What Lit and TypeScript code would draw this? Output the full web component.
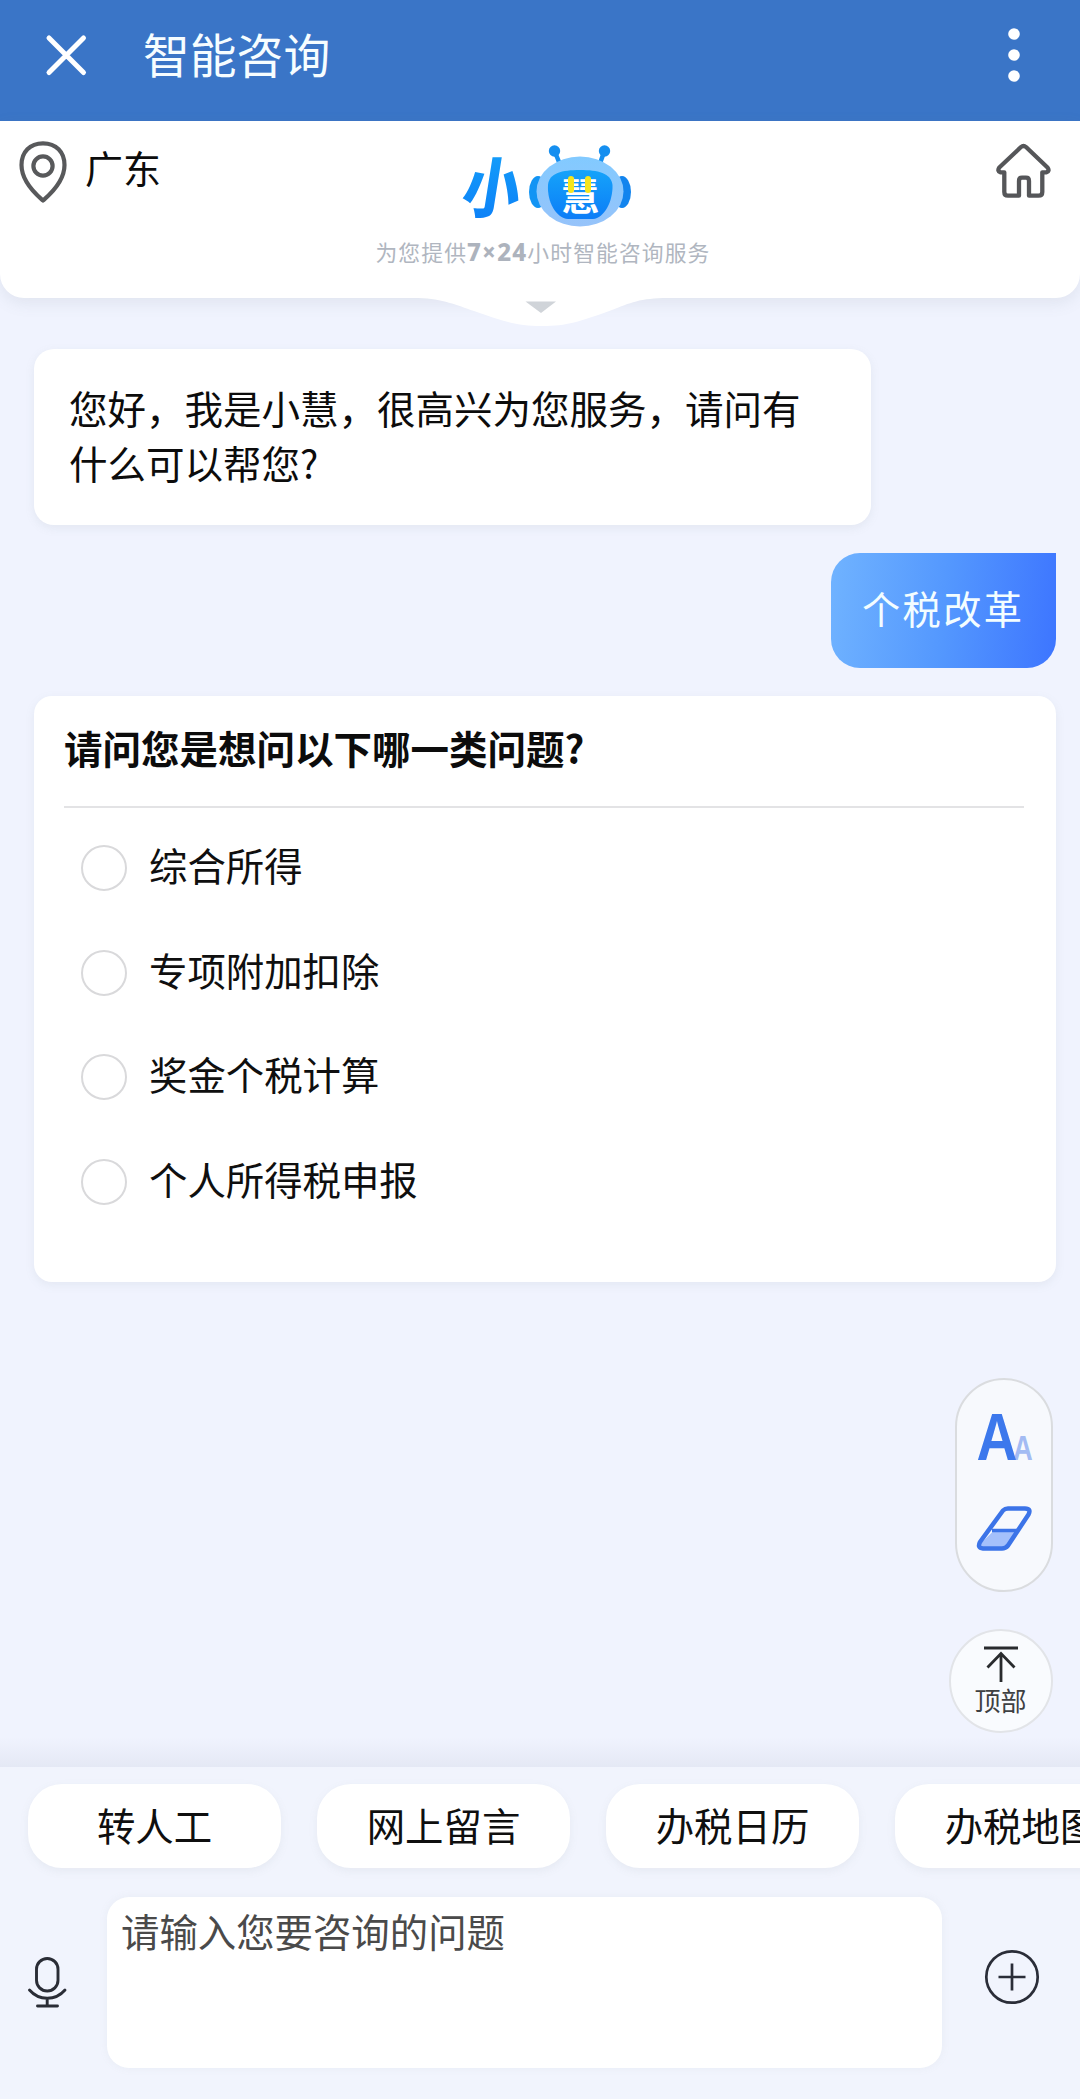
import { LitElement, html, css } from "lit";
import { customElement, property, state } from "lit/decorators.js";

@customElement("app-bar")
class AppBar extends LitElement {
  static styles = css`
    :host { display: flex; align-items: center; height: 121px; background: #3a75c7; color: #f6fdff; box-sizing: border-box; padding: 0 60px 12px 44px; }
    .close, .more { display: block; flex: none; }
    .title { flex: 1; margin: -4px 0 0 55px; font-size: 46.8px; line-height: 70px; font-weight: 400; }
  `;
  render() {
    return html`
      <svg class="close" width="44" height="44" viewBox="0 0 44 44" fill="none" stroke="#fff" stroke-width="5" stroke-linecap="round"><path d="M5 5L39.500 39.500M39.500 5L5 39.500" /></svg>
      <h1 class="title">智能咨询</h1>
      <svg class="more" width="12" height="56" viewBox="0 0 12 56" fill="#fff"><circle cx="6" cy="7" r="5.800" /><circle cx="6" cy="28" r="5.800" /><circle cx="6" cy="49" r="5.800" /></svg>
    `;
  }
}

@customElement("brand-header")
class BrandHeader extends LitElement {
  static styles = css`
    :host { display: block; position: relative; z-index: 1; height: 177px; }
    .panel { display: flex; justify-content: space-between; height: 177px; box-sizing: border-box; background: #fff; border-radius: 0 0 24px 24px; box-shadow: 0 5px 16px rgba(105, 120, 130, 0.12); padding: 0 26px 0 17px; }
    .place { display: flex; align-items: flex-start; width: 235px; padding-top: 18px; box-sizing: border-box; }
    .city { font-size: 38px; line-height: 56px; margin-left: 16px; color: #0c0c0c; }
    .brand { display: flex; flex-direction: column; align-items: center; padding-top: 20px; }
    .logo { display: block; margin-left: 5px; }
    .slogan { display: flex; align-items: center; font-size: 21.800px; letter-spacing: 1.100px; line-height: 30px; color: #b0b6c0; margin-top: 4px; white-space: nowrap; }
    .hours { font-family: "Noto Sans", sans-serif; font-size: 24px; font-weight: 800; letter-spacing: 1.200px; color: #adb3bd; }
    .side { display: flex; justify-content: flex-end; width: 220px; padding-top: 21px; box-sizing: border-box; }
    .bump { position: absolute; left: 418px; top: 170px; }
  `;
  render() {
    return html`
      <div class="panel">
        <div class="place">
          <svg width="52" height="66" viewBox="0 0 52 66" fill="none" stroke="#58595b" stroke-width="4.200" stroke-linejoin="round"><path d="M26 61.500C21 57 4.500 44 4.500 26C4.500 13 13 4.300 26 4.300S47.500 13 47.500 26C47.500 44 31 57 26 61.500Z" /><circle cx="26" cy="27" r="9.600" /></svg>
          <span class="city">广东</span>
        </div>
        <div class="brand">
          <svg class="logo" width="180" height="92" viewBox="0 0 180 92">
            <defs>
              <linearGradient id="ink" x1="0" y1="0" x2="0" y2="1"><stop offset="0" stop-color="#15a3fa" /><stop offset="1" stop-color="#0c7df7" /></linearGradient>
              <linearGradient id="shell" x1="0" y1="0" x2="0" y2="1"><stop offset="0" stop-color="#82caff" /><stop offset="1" stop-color="#96c3fa" /></linearGradient>
            </defs>
            <text x="0" y="0" transform="translate(4.500 71) skewX(-9) scale(.9 1.020)" font-family="Noto Sans CJK SC, sans-serif" font-weight="900" font-size="64" fill="url(#ink)">小</text>
            <ellipse cx="83" cy="51" rx="9" ry="16" fill="#1294f4" />
            <ellipse cx="167" cy="51" rx="9" ry="16" fill="#1284ee" />
            <circle cx="99.500" cy="10" r="5.700" fill="#158ff0" /><path d="M100 11L104 21" stroke="#158ff0" stroke-width="4.500" />
            <circle cx="149.500" cy="10" r="5.700" fill="#158ff0" /><path d="M149 11L145.500 21" stroke="#158ff0" stroke-width="4.500" />
            <ellipse cx="125" cy="50.500" rx="43.500" ry="35" fill="url(#shell)" />
            <path d="M93 44C94 32 107 29 125 29S156 32 157.500 44C158 61 149 77 138 78H113C101 77 92 61 93 44Z" fill="url(#ink)" />
            <text x="106" y="69" font-family="Noto Sans CJK SC, sans-serif" font-weight="700" font-size="38" fill="#fff">慧</text>
            <rect x="113" y="35" width="6" height="17" rx="3" fill="#f6e51c" /><rect x="130" y="35" width="6" height="17" rx="3" fill="#f6e51c" />
          </svg>
          <div class="slogan">为您提供<span class="hours">7×24</span>小时智能咨询服务</div>
        </div>
        <div class="side">
          <svg width="60" height="60" viewBox="0 0 60 60" fill="none" stroke="#555659" stroke-width="4.300" stroke-linejoin="round" stroke-linecap="round"><path d="M27 5Q29.500 2.800 32 5L53.500 25.500Q56 29 52.500 30.300H48.300V50Q48.300 53.700 44.500 53.700H35V39Q35 35.700 32 35.700H28Q25 35.700 25 39V53.700H14Q10.300 53.700 10.300 50V30.300H6.300Q3 29 5.300 25.500Z" /></svg>
        </div>
      </div>
      <svg class="bump" width="250" height="50" viewBox="0 0 250 50">
        <path d="M0 7C26 8 38 14 56 20C88 31 98 35 124 35S160 31 194 19C212 12 222 7 250 7V0H0Z" fill="#fff" />
        <path d="M107.500 10.500H138L123 22Z" fill="#d0d4d9" />
      </svg>
    `;
  }
}

@customElement("choice-card")
class ChoiceCard extends LitElement {
  @property({ type: Array }) options: string[] = [];
  @state() private picked = -1;
  static styles = css`
    :host { display: block; box-sizing: border-box; height: 586px; background: #fff; border-radius: 18px; padding: 22px 32px 0 30px; box-shadow: 0 3px 10px rgba(130, 145, 150, 0.11); }
    .question { margin: 0; font-size: 38.500px; line-height: 58px; font-weight: 700; color: #0c0c0c; padding-bottom: 30px; border-bottom: 2px solid #e3e3e5; }
    .list { display: flex; flex-direction: column; gap: 46.500px; padding: 27px 0 0 17px; }
    .option { display: flex; align-items: center; gap: 22px; height: 58px; font-size: 38.400px; color: #0f0f0f; cursor: pointer; }
    .ring { flex: none; width: 46px; height: 46px; box-sizing: border-box; border: 2px solid #d9d9db; border-radius: 50%; margin-top: 8px; }
    .ring.on { border: 12px solid #3d76fe; }
    .label { line-height: 58px; }
  `;
  render() {
    return html`
      <h2 class="question">请问您是想问以下哪一类问题?</h2>
      <div class="list">
        ${this.options.map((o, i) => html`<div class="option" @click=${() => (this.picked = i)}><span class="ring ${this.picked === i ? "on" : ""}"></span><span class="label">${o}</span></div>`)}
      </div>
    `;
  }
}

@customElement("floating-tools")
class FloatingTools extends LitElement {
  static styles = css`
    :host { display: flex; flex-direction: column; align-items: flex-end; gap: 37px; }
    .pill { display: flex; flex-direction: column; align-items: center; gap: 32px; width: 98px; height: 214px; box-sizing: border-box; border: 2px solid #dadcdf; border-radius: 49px; background: #f7f9fd; padding-top: 28px; }
    .top { display: flex; flex-direction: column; align-items: center; width: 104px; height: 104px; box-sizing: border-box; border: 2px solid #e2e4e8; border-radius: 50%; background: #f9fbfe; padding-top: 13px; font-size: 26px; line-height: 28px; color: #3e4042; }
  `;
  render() {
    return html`
      <div class="pill">
        <svg width="64" height="60" viewBox="0 0 64 60" font-family="Liberation Sans, sans-serif" font-weight="700">
          <text transform="translate(41 51.500) scale(.78 1)" font-size="35" fill="#a3bbf3">A</text>
          <text transform="translate(4.500 51.500) scale(.84 1)" font-size="67.500" fill="#3c78ec">A</text>
        </svg>
        <svg width="64" height="56" viewBox="0 0 64 56" fill="none" stroke="#3c74e8" stroke-width="4.500" stroke-linejoin="round">
          <path d="M21.500 31H45L35 46.500Q33.500 48.500 31 48.500H11Q5 48.500 7.500 44.500Z" fill="#a4c0fb" stroke="none" />
          <path d="M31 10.500Q33 8.500 36 8.500H53Q59.500 8.500 56.500 14.500L36 45.500Q33.500 48.500 30 48.500H11Q5 48 8 42Z" />
          <path d="M20 30.500H45" stroke-width="3.500" />
        </svg>
      </div>
      <div class="top">
        <svg width="44" height="42" viewBox="0 0 44 42" fill="none" stroke="#292b2e" stroke-width="2.800"><path d="M5 4H39M22 10V38M8.500 23.500L22 9.500L35.500 23.500" /></svg>
        <span>顶部</span>
      </div>
    `;
  }
}

@customElement("chat-composer")
class ChatComposer extends LitElement {
  @property({ type: Array }) shortcuts: string[] = [];
  static styles = css`
    :host { display: block; height: 332px; box-sizing: border-box; background: #f1f4fd; overflow: hidden; padding-top: 17px; }
    .chips { display: flex; gap: 36px; padding-left: 28px; }
    .chip { flex: none; width: 253px; height: 84px; border-radius: 34px; background: #fff; box-shadow: 0 3px 9px rgba(140, 150, 150, 0.1); text-align: center; font-size: 38.400px; line-height: 80px; color: #0f0f0f; white-space: nowrap; }
    .entry { display: flex; align-items: center; margin-top: 29px; padding-left: 22px; }
    .mic { flex: none; margin: -1px 35px 0 0; }
    .field { flex: none; width: 835px; height: 171px; box-sizing: border-box; border-radius: 22px; background: #fff; box-shadow: 0 0 9px rgba(140, 150, 150, 0.09); padding: 4px 14px; font-size: 38.400px; line-height: 58px; color: #4a4a4a; }
    .plus { flex: none; margin: -12px 0 0 41px; }
  `;
  render() {
    return html`
      <div class="chips">${this.shortcuts.map((s) => html`<div class="chip">${s}</div>`)}</div>
      <div class="entry">
        <svg class="mic" width="50" height="56" viewBox="0 0 50 56" fill="none" stroke="#2a2d36" stroke-width="2.900" stroke-linecap="round"><rect x="14.500" y="4.500" width="21.500" height="32.500" rx="10.700" /><path d="M7.500 36C17 47 33.500 47 43 36M25.200 44.500V52M15.500 52H35.500" /></svg>
        <div class="field">请输入您要咨询的问题</div>
        <svg class="plus" width="58" height="58" viewBox="0 0 58 58" fill="none" stroke="#2a2d38" stroke-width="2.700"><circle cx="29" cy="29" r="25.700" /><path d="M29 15.500V42.500M15.500 29H42.500" /></svg>
      </div>
    `;
  }
}

@customElement("app-root")
class AppRoot extends LitElement {
  static styles = css`
    :host { display: flex; flex-direction: column; position: relative; width: 1080px; height: 2099px; overflow: hidden; background: #f0f3fe; font-family: "Noto Sans CJK SC", sans-serif; color: #0c0c0c; }
    .chat { display: flex; flex-direction: column; flex: 1; box-sizing: border-box; padding: 51px 24px 0 34px; background: linear-gradient(to top, rgba(213, 218, 232, 0.42), rgba(240, 243, 254, 0) 30px); }
    .bot { width: 837px; height: 176px; box-sizing: border-box; background: #fff; border-radius: 20px; padding: 31px 60px 0 35px; font-size: 38.500px; line-height: 55px; box-shadow: 0 3px 10px rgba(130, 145, 150, 0.12); }
    .user { align-self: flex-end; width: 225px; height: 115px; box-sizing: border-box; margin: 28px 0; padding-left: 31px; border-radius: 29px 0 29px 29px; background: linear-gradient(96deg, #70b3ff, #5498fe 50%, #3d75ff); color: #f3fdff; font-size: 38.200px; letter-spacing: 2.400px; line-height: 109px; white-space: nowrap; }
    .tools { position: absolute; right: 27.500px; top: 1378px; }
  `;
  render() {
    return html`
      <app-bar></app-bar>
      <brand-header></brand-header>
      <main class="chat">
        <div class="bot">您好，我是小慧，很高兴为您服务，请问有什么可以帮您?</div>
        <div class="user">个税改革</div>
        <choice-card .options=${["综合所得", "专项附加扣除", "奖金个税计算", "个人所得税申报"]}></choice-card>
      </main>
      <chat-composer .shortcuts=${["转人工", "网上留言", "办税日历", "办税地图"]}></chat-composer>
      <floating-tools class="tools"></floating-tools>
    `;
  }
}
